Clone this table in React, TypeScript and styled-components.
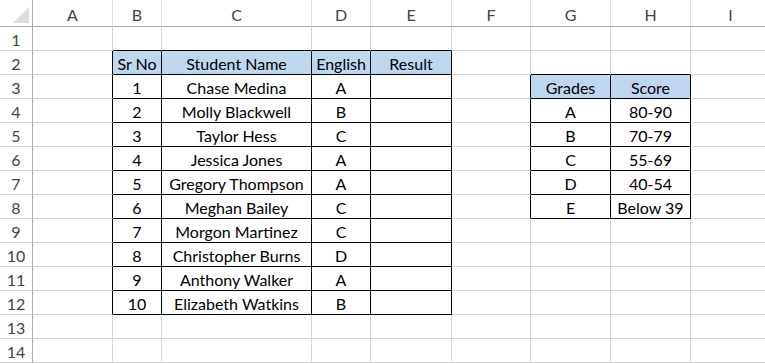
import styled, { createGlobalStyle } from 'styled-components';

const GlobalStyle = createGlobalStyle`
  html, body {
    margin: 0;
    padding: 0;
    background: #ffffff;
    overflow: hidden;
  }
  body {
    font-family: Lato, "Liberation Sans", sans-serif;
  }
`;

// === DATA ===

const COLUMNS = [
  { key: 'A', width: 80 },
  { key: 'B', width: 49 },
  { key: 'C', width: 150 },
  { key: 'D', width: 59 },
  { key: 'E', width: 81 },
  { key: 'F', width: 79 },
  { key: 'G', width: 80 },
  { key: 'H', width: 80 },
  { key: 'I', width: 80 },
];

const ROW_COUNT = 14;

const students = [
  ['1', 'Chase Medina', 'A'],
  ['2', 'Molly Blackwell', 'B'],
  ['3', 'Taylor Hess', 'C'],
  ['4', 'Jessica Jones', 'A'],
  ['5', 'Gregory Thompson', 'A'],
  ['6', 'Meghan Bailey', 'C'],
  ['7', 'Morgon Martinez', 'C'],
  ['8', 'Christopher Burns', 'D'],
  ['9', 'Anthony Walker', 'A'],
  ['10', 'Elizabeth Watkins', 'B'],
];

const grades = [
  ['A', '80-90'],
  ['B', '70-79'],
  ['C', '55-69'],
  ['D', '40-54'],
  ['E', 'Below 39'],
];

// cell content keyed by "row:colIndex" (colIndex 0 = A)
const cells: Record<string, string> = {};
const headerCells = new Set<string>();
const boxed = new Set<string>();

const put = (row: number, col: number, value: string, header = false) => {
  cells[`${row}:${col}`] = value;
  boxed.add(`${row}:${col}`);
  if (header) headerCells.add(`${row}:${col}`);
};

['Sr No', 'Student Name', 'English', 'Result'].forEach((h, i) => put(2, 1 + i, h, true));
students.forEach((s, r) => {
  put(3 + r, 1, s[0]);
  put(3 + r, 2, s[1]);
  put(3 + r, 3, s[2]);
  put(3 + r, 4, '');
});

['Grades', 'Score'].forEach((h, i) => put(3, 6 + i, h, true));
grades.forEach((g, r) => {
  put(4 + r, 6, g[0]);
  put(4 + r, 7, g[1]);
});

const inBox = (row: number, col: number) => boxed.has(`${row}:${col}`);

// === STYLED COMPONENTS ===

const Sheet = styled.div`
  display: grid;
  grid-template-columns: 33px ${COLUMNS.map(c => `${c.width}px`).join(' ')};
  grid-template-rows: 27px repeat(${ROW_COUNT}, 24px);
  width: 771px;
  background: #ffffff;
`;

const Corner = styled.div`
  position: relative;
  box-sizing: border-box;
  border-right: 1px solid #ababab;
  border-bottom: 1px solid #ababab;

  &::after {
    content: '';
    position: absolute;
    right: 3px;
    bottom: 3px;
    width: 0;
    height: 0;
    border-left: 16px solid transparent;
    border-bottom: 16px solid #dcdcdc;
  }
`;

const ColumnHeader = styled.div`
  box-sizing: border-box;
  display: flex;
  align-items: center;
  justify-content: center;
  padding-top: 2px;
  font-size: 16px;
  color: #444444;
  border-bottom: 1px solid #ababab;
  border-right: 1px solid #e1e1e1;
`;

const RowHeader = styled.div`
  box-sizing: border-box;
  display: flex;
  align-items: center;
  justify-content: center;
  padding-top: 1px;
  font-size: 16px;
  color: #444444;
  border-right: 1px solid #ababab;
  border-bottom: 1px solid #d4d4d4;
`;

const Cell = styled.div<{ $right: boolean; $bottom: boolean; $fill: boolean }>`
  box-sizing: border-box;
  display: flex;
  align-items: center;
  justify-content: center;
  padding-top: 2px;
  font-size: 16px;
  color: #000000;
  white-space: nowrap;
  overflow: hidden;
  background: ${({ $fill }) => ($fill ? '#bdd7ee' : 'transparent')};
  border-right: 1px solid ${({ $right }) => ($right ? '#000000' : '#d4d4d4')};
  border-bottom: 1px solid ${({ $bottom }) => ($bottom ? '#000000' : '#d4d4d4')};
`;

// === COMPONENT ===

export default function App() {
  const rows = Array.from({ length: ROW_COUNT }, (_, i) => i + 1);

  return (
    <>
      <GlobalStyle />
      <Sheet>
        <Corner />
        {COLUMNS.map(c => (
          <ColumnHeader key={c.key}>{c.key}</ColumnHeader>
        ))}

        {rows.map(row => [
          <RowHeader key={`h${row}`}>{row}</RowHeader>,
          ...COLUMNS.map((_, col) => {
            const here = inBox(row, col);
            return (
              <Cell
                key={`${row}:${col}`}
                $right={here || inBox(row, col + 1)}
                $bottom={here || inBox(row + 1, col)}
                $fill={headerCells.has(`${row}:${col}`)}
              >
                {cells[`${row}:${col}`] ?? ''}
              </Cell>
            );
          }),
        ])}
      </Sheet>
    </>
  );
}
